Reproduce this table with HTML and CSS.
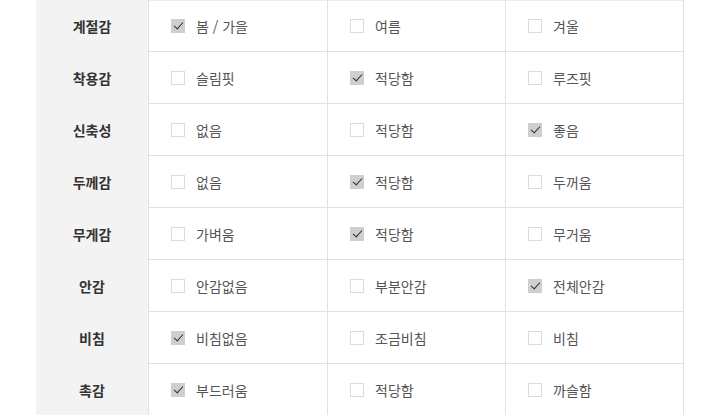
FILE: index.html
```html
<!DOCTYPE html>
<html lang="ko">
<head>
<meta charset="utf-8">
<link rel="stylesheet" href="styles.css">
</head>
<body>
<div class="table">
  <div class="row">
    <div class="head">계절감</div>
    <div class="cell"><span class="box on"></span><span class="label">봄 / 가을</span></div>
    <div class="cell"><span class="box"></span><span class="label">여름</span></div>
    <div class="cell"><span class="box"></span><span class="label">겨울</span></div>
  </div>
  <div class="row">
    <div class="head">착용감</div>
    <div class="cell"><span class="box"></span><span class="label">슬림핏</span></div>
    <div class="cell"><span class="box on"></span><span class="label">적당함</span></div>
    <div class="cell"><span class="box"></span><span class="label">루즈핏</span></div>
  </div>
  <div class="row">
    <div class="head">신축성</div>
    <div class="cell"><span class="box"></span><span class="label">없음</span></div>
    <div class="cell"><span class="box"></span><span class="label">적당함</span></div>
    <div class="cell"><span class="box on"></span><span class="label">좋음</span></div>
  </div>
  <div class="row">
    <div class="head">두께감</div>
    <div class="cell"><span class="box"></span><span class="label">없음</span></div>
    <div class="cell"><span class="box on"></span><span class="label">적당함</span></div>
    <div class="cell"><span class="box"></span><span class="label">두꺼움</span></div>
  </div>
  <div class="row">
    <div class="head">무게감</div>
    <div class="cell"><span class="box"></span><span class="label">가벼움</span></div>
    <div class="cell"><span class="box on"></span><span class="label">적당함</span></div>
    <div class="cell"><span class="box"></span><span class="label">무거움</span></div>
  </div>
  <div class="row">
    <div class="head">안감</div>
    <div class="cell"><span class="box"></span><span class="label">안감없음</span></div>
    <div class="cell"><span class="box"></span><span class="label">부분안감</span></div>
    <div class="cell"><span class="box on"></span><span class="label">전체안감</span></div>
  </div>
  <div class="row">
    <div class="head">비침</div>
    <div class="cell"><span class="box on"></span><span class="label">비침없음</span></div>
    <div class="cell"><span class="box"></span><span class="label">조금비침</span></div>
    <div class="cell"><span class="box"></span><span class="label">비침</span></div>
  </div>
  <div class="row">
    <div class="head">촉감</div>
    <div class="cell"><span class="box on"></span><span class="label">부드러움</span></div>
    <div class="cell"><span class="box"></span><span class="label">적당함</span></div>
    <div class="cell"><span class="box"></span><span class="label">까슬함</span></div>
  </div>
</div>
</body>
</html>
```

FILE: styles.css
```css
html, body {
  margin: 0;
  padding: 0;
  background: #ffffff;
}
body {
  font-family: "Noto Sans CJK KR", "Noto Sans", sans-serif;
  font-size: 14px;
  color: #555555;
}
.table {
  margin-left: 36px;
  width: 648px;
}
.row {
  display: grid;
  grid-template-columns: 112px 179px 178px 179px;
  height: 52px;
}
.row:first-child {
  height: 52px;
}
.head {
  background: #f3f3f3;
  display: flex;
  align-items: center;
  justify-content: center;
  font-weight: 700;
  color: #333333;
  font-size: 14px;
}
.cell {
  box-sizing: border-box;
  border-left: 1px solid #e2e2e2;
  border-bottom: 1px solid #e2e2e2;
  display: flex;
  align-items: center;
  padding-left: 22px;
  gap: 11px;
}
.row:first-child .cell {
  border-top: 1px solid #ececec;
}
.cell:last-child {
  border-right: 1px solid #e2e2e2;
}
.box {
  box-sizing: border-box;
  width: 14px;
  height: 14px;
  border: 1px solid #dcdcdc;
  background: #ffffff;
  position: relative;
  flex: none;
}
.box.on {
  background: #cfcfcf;
  border-color: #cfcfcf;
}
.box.on::after {
  content: "";
  position: absolute;
  left: 4px;
  top: 0px;
  width: 4px;
  height: 8px;
  border-right: 1.5px solid #2e2e2e;
  border-bottom: 1.5px solid #2e2e2e;
  transform: rotate(42deg);
}
.label {
  line-height: 20px;
}
```
